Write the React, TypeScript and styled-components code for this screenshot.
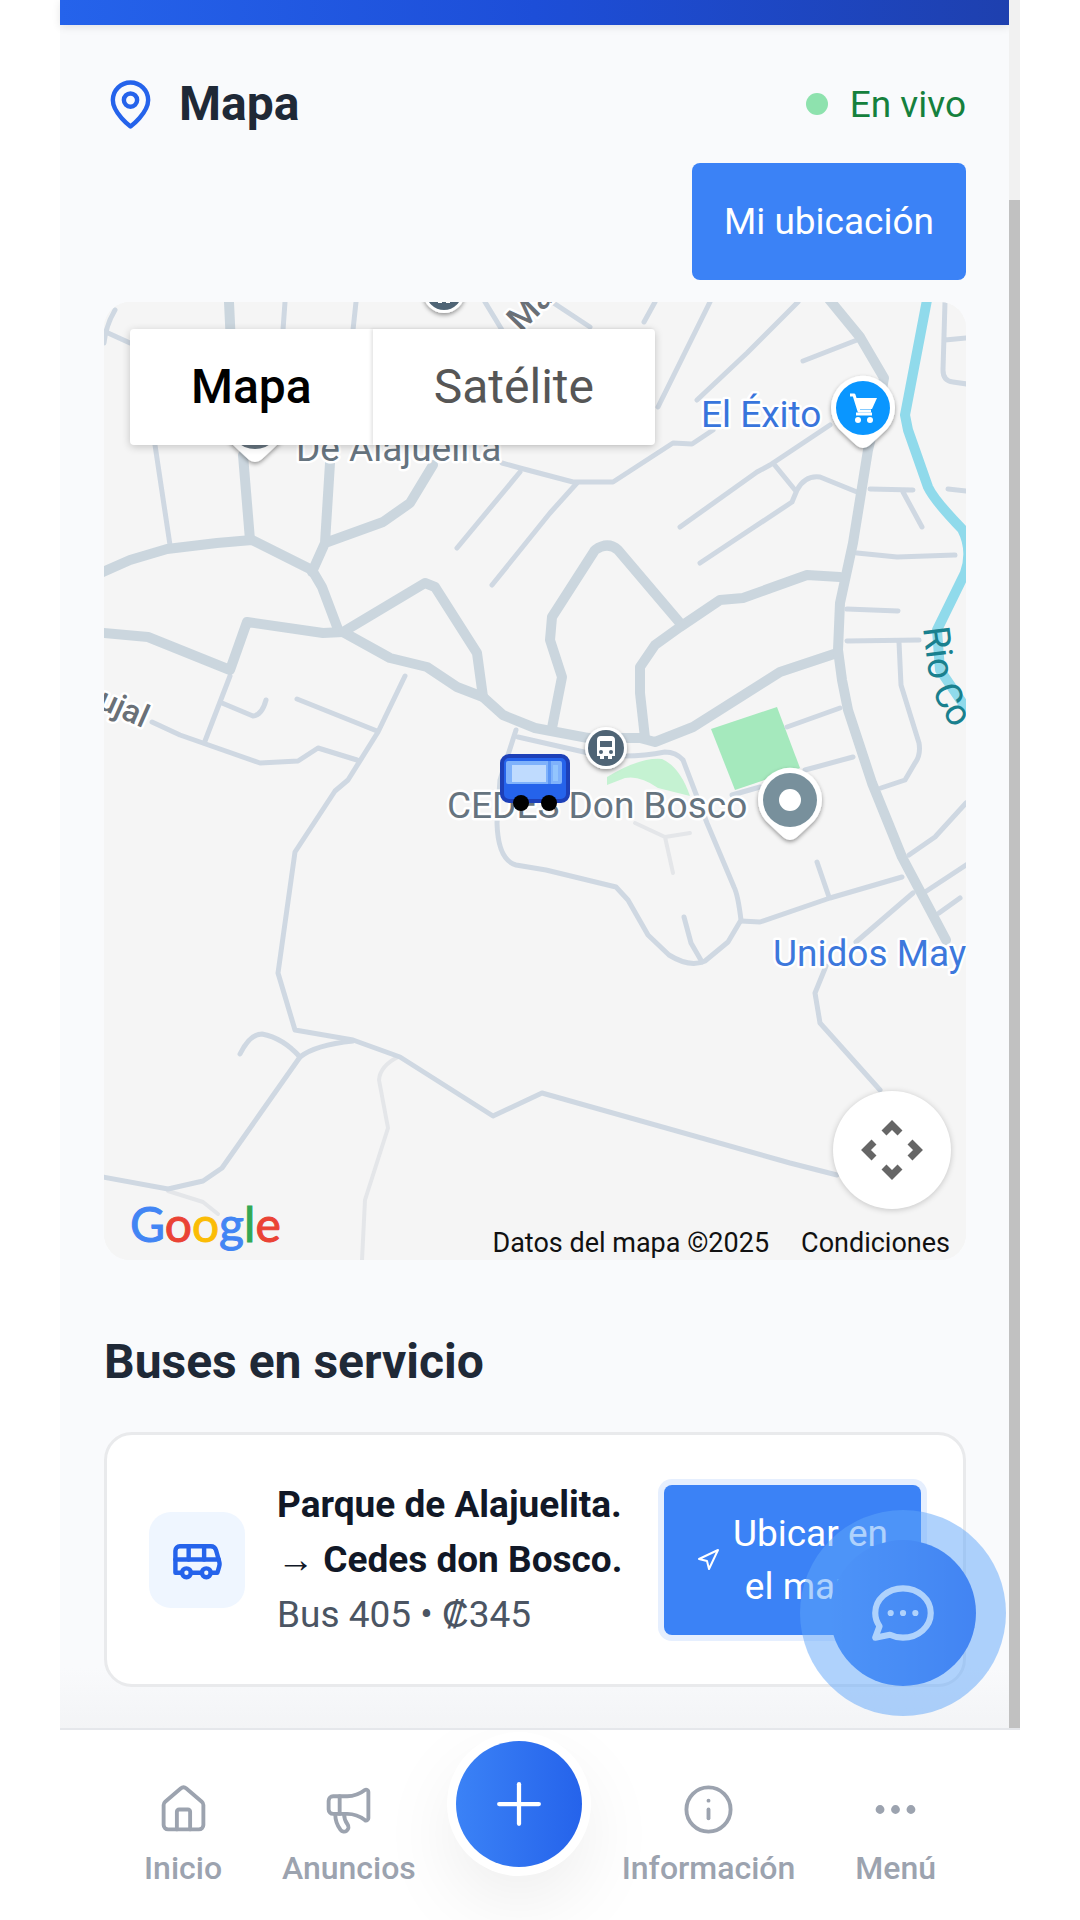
import React from "react";
import styled, { createGlobalStyle } from "styled-components";
import { Bus, Ellipsis, House, Info, Megaphone, Navigation, Plus } from "lucide-react";

const GlobalStyle = createGlobalStyle`
  *, *::before, *::after { box-sizing: border-box; }
  body {
    margin: 0;
    background: #ffffff;
    font-family: Roboto, "Liberation Sans", sans-serif;
    color: #1f2937;
  }
  button { font: inherit; border: 0; padding: 0; cursor: pointer; }
  h1, h2, h3, p { margin: 0; }
`;

const Frame = styled.div`
  position: relative;
  display: flex;
  flex-direction: column;
  max-width: 960px;
  min-height: 100vh;
  margin: 0 auto;
`;

const Viewport = styled.div`
  display: flex;
  flex: 1;
`;

const Page = styled.div`
  flex: 1;
  min-width: 0;
  background: linear-gradient(0deg, #f3f4f6, #f9fafc 60px);
`;

const ScrollTrack = styled.div`
  display: flex;
  width: 11px;
  padding-top: 200px;
  background: #f1f1f1;
`;

const ScrollThumb = styled.div`
  flex: 1;
  background: #c1c1c1;
`;

const TopBar = styled.header`
  height: 25px;
  background: linear-gradient(90deg, #2563eb, #1d4ed8 50%, #1e40af);
  box-shadow: 0 2px 8px rgba(0, 0, 0, 0.1);
`;

const Content = styled.main`
  display: flex;
  flex-direction: column;
  padding: 47px 43px 40px 44px;
`;

const SectionHeader = styled.div`
  display: flex;
  justify-content: space-between;
  align-items: flex-start;
  margin-bottom: 22px;
`;

const TitleGroup = styled.div`
  display: flex;
  align-items: center;
  gap: 22px;
  height: 64px;

  svg { color: #2563eb; }
`;

const Title = styled.h1`
  font-size: 48px;
  line-height: 60px;
  font-weight: 700;
`;

const StatusColumn = styled.div`
  display: flex;
  flex-direction: column;
  align-items: flex-end;
  gap: 27px;
`;

const LiveStatus = styled.div`
  display: flex;
  align-items: center;
  gap: 22px;
  height: 64px;
  font-size: 37px;
  color: #15803d;

  &::before {
    content: "";
    width: 22px;
    height: 22px;
    border-radius: 50%;
    background: #8ee2ae;
  }
`;

const PrimaryButton = styled.button`
  padding: 32px;
  border-radius: 8px;
  background: #3b82f6;
  color: #ffffff;
  font-size: 37px;
  line-height: 53px;
`;

const MapCard = styled.section`
  position: relative;
  overflow: hidden;
  aspect-ratio: 862 / 958;
  border-radius: 26px;
  background: #f5f5f5;
`;

const MapCanvas = styled.svg`
  display: block;
  width: 100%;
  height: 100%;
`;

const MapTypes = styled.div`
  position: absolute;
  top: 27px;
  left: 26px;
  display: flex;
  border-radius: 4px;
  background: #ffffff;
  box-shadow: 0 2px 8px rgba(0, 0, 0, 0.2);
`;

const MapTypeButton = styled.button<{ $active?: boolean }>`
  padding: 28px 61px;
  background: transparent;
  font-size: 48px;
  line-height: 60px;
  font-weight: ${(p) => (p.$active ? 500 : 400)};
  color: ${(p) => (p.$active ? "#000000" : "#565656")};

  & + & { box-shadow: -2px 0 3px rgba(0, 0, 0, 0.1); }
`;

const PanButton = styled.button`
  position: absolute;
  right: 15px;
  bottom: 51px;
  width: 118px;
  height: 118px;
  border-radius: 50%;
  background: #ffffff;
  box-shadow: 0 1px 6px rgba(0, 0, 0, 0.2);

  svg { display: block; margin: auto; }
`;

const MapFooter = styled.div`
  position: absolute;
  left: 26px;
  right: 16px;
  bottom: 0;
  display: flex;
  align-items: flex-end;
  justify-content: space-between;
`;

const GoogleLogo = styled.a`
  padding-bottom: 6px;
  font-family: Lato, Roboto, sans-serif;
  font-size: 48px;
  line-height: 60px;
  font-weight: 400;
  text-decoration: none;
`;

const LogoLetter = styled.span<{ $tone: string }>`
  color: ${(p) => p.$tone};
  -webkit-text-stroke: 1px ${(p) => p.$tone};
`;

const Credits = styled.div`
  display: flex;
  gap: 32px;
  font-size: 27px;
  line-height: 34px;
  color: #111111;
`;

const TermsLink = styled.a`
  color: inherit;
  text-decoration: none;
`;

const ListTitle = styled.h2`
  margin: 72px 0 40px;
  font-size: 48px;
  line-height: 60px;
  font-weight: 700;
`;

const BusCard = styled.article`
  display: flex;
  align-items: center;
  padding: 42px;
  border: 3px solid #e9eaec;
  border-radius: 28px;
  background: #ffffff;
`;

const BusBadge = styled.div`
  display: grid;
  place-items: center;
  flex: none;
  width: 96px;
  height: 96px;
  margin-right: 32px;
  border-radius: 22px;
  background: #eff6ff;
  color: #2563eb;
`;

const BusText = styled.div`
  flex: 1;
  min-width: 0;
  margin-right: 22px;
  font-size: 37px;
  line-height: 55px;
`;

const RouteName = styled.h3`
  font-size: inherit;
  font-weight: 700;
  color: #111827;
`;

const RouteMeta = styled.p`
  color: #4b5563;
`;

const LocateButton = styled(PrimaryButton)`
  display: flex;
  flex: 0 0 257px;
  align-items: center;
  gap: 12px;
  padding: 22px 32px;
  box-shadow: 0 0 0 6px #e6effe;

  svg { flex: none; }
  span { flex: 1; }
`;

const ChatButton = styled.button`
  position: absolute;
  right: 14px;
  bottom: 204px;
  display: grid;
  place-items: center;
  width: 206px;
  height: 206px;
  border-radius: 50%;
  background: transparent;

  &::after {
    content: "";
    position: absolute;
    inset: 0;
    border-radius: 50%;
    background: rgba(96, 165, 250, 0.5);
  }
`;

const ChatDisc = styled.span`
  display: grid;
  place-items: center;
  width: 146px;
  height: 146px;
  border-radius: 50%;
  background: linear-gradient(90deg, #3b82f6, #2563eb);
  color: #ffffff;
`;

const BottomNav = styled.nav`
  display: flex;
  justify-content: space-between;
  align-items: flex-start;
  height: 192px;
  padding: 0 64px;
  overflow: hidden;
  border-top: 2px solid #e5e7eb;
  background: #ffffff;
`;

const NavLink = styled.a`
  display: flex;
  flex-direction: column;
  align-items: center;
  gap: 11px;
  padding: 53px 20px 0;
  color: #9ca3af;
  font-size: 32px;
  line-height: 42px;
  font-weight: 500;
  text-decoration: none;
`;

const AddButton = styled.button`
  display: grid;
  place-items: center;
  width: 126px;
  height: 126px;
  margin-top: 11px;
  border-radius: 50%;
  background: linear-gradient(90deg, #3b82f6, #2563eb);
  color: #ffffff;
  box-shadow: 0 0 0 9px #ffffff, 0 30px 80px 4px rgba(0, 0, 0, 0.08);
`;

const streets = [
  "M115 310Q106 325 104 343M108 333L130 343",
  "M285 302L283 330M356 302L353 330M485 302L502 330",
  "M155 445L170 545",
  "M520 472L457 548M577 483L550 513L492 585",
  "M502 463L520 468L573 482H613L673 443L692 444L713 430",
  "M552 302L590 327M655 302L644 322M710 302L658 407M798 302L747 353L697 400",
  "M803 361L857 340",
  "M680 527L757 472L770 465L830 425M773 463L795 490",
  "M700 563L792 502L797 490Q805 475 820 477L857 492",
  "M870 489L913 490M903 492L922 527M948 489L967 491",
  "M857 553L897 557L955 555M847 609L898 611M847 641L919 640",
  "M899 642L901 685L919 743Q921 755 915 763L905 780L881 788",
  "M787 727L840 708M805 770L853 757M732 795L760 787",
  "M945 302L943 370Q943 381 953 382L967 384M945 340L967 338",
  "M230 676L205 741M222 703L253 716Q262 715 266 700",
  "M152 722L180 735L260 763L298 761L318 748L357 760M297 699L377 731",
  "M405 676L378 732L348 780L335 791L295 852L278 973L295 1030L353 1040L400 1057L493 1116L542 1093L790 1163L837 1175",
  "M240 1054Q250 1034 262 1034Q283 1038 300 1057Q315 1045 353 1041",
  "M300 1057L222 1168L203 1181L168 1189L103 1177",
  "M516 730L500 780L497 823Q498 860 516 865L546 870L616 887L628 900L648 935L669 955Q690 968 705 961L728 942L741 920Q738 895 734 887L707 823L683 760Q676 752 665 752Q625 760 584 752L518 737",
  "M741 921L760 922L830 898L902 877M817 862L829 897M684 917L691 943L702 962",
  "M966 803L935 837L909 855M966 865L925 892M913 893L856 942M939 913L960 898",
  "M826 966L815 993L820 1023L880 1090",
];

const avenues = [
  "M103 572L130 560L167 549L217 543L252 540L312 570L322 587L339 632",
  "M229 302L231 345M243 455L250 540",
  "M330 463L325 543L312 572M325 543L383 522L410 503L433 465",
  "M103 633L148 637L230 670L247 622L323 633L343 632L425 583L435 587L477 653L483 697",
  "M343 632L390 658L427 667L457 687L483 697L503 715L535 728L588 738H640L655 742L693 727L780 672L837 653",
  "M552 728L562 677L550 640L552 617L595 550Q608 541 618 550L680 623",
  "M645 738L640 693V667L655 645L680 627L720 600L743 598L807 575L840 577",
];

const trails = [
  "M398 1057Q380 1066 379 1080L388 1128L365 1200L362 1260",
  "M168 1191L203 1202L218 1214",
  "M635 823L665 837L690 833M665 837L673 873",
];

const LocationIcon = () => (
  <svg width="53" height="53" viewBox="0 0 24 24" fill="none" stroke="currentColor" strokeWidth="2" strokeLinecap="round" strokeLinejoin="round" aria-hidden="true">
    <path d="M20 10c0 6-8 12-8 12s-8-6-8-12a8 8 0 0 1 16 0Z" />
    <circle cx="12" cy="10" r="3" />
  </svg>
);

const PlacePin = ({ x, y, fill, children }: { x: number; y: number; fill: string; children?: React.ReactNode }) => (
  <g transform={`translate(${x} ${y})`}>
    <path d="M-24 21A32 32 0 1 1 24 21L7 37Q0 43 -7 37Z" fill="#fff" filter="url(#lift)" />
    <circle r="27" fill={fill} />
    {children}
  </g>
);

const StopIcon = ({ x, y }: { x: number; y: number }) => (
  <g transform={`translate(${x} ${y})`}>
    <circle r="21" fill="#fff" filter="url(#lift)" />
    <circle r="18" fill="#4f6475" />
    <path d="M-9 -8Q-9 -12 -5 -12H5Q9 -12 9 -8V8H6V11H2V8H-2V11H-6V8H-9Z" fill="#fff" />
    <path d="M-6 -7H6V-1H-6Z" fill="#4f6475" />
    <circle cx="-5" cy="4" r="2" fill="#4f6475" />
    <circle cx="5" cy="4" r="2" fill="#4f6475" />
  </g>
);

const StreetMap = () => (
  <MapCanvas viewBox="104 302 862 958" preserveAspectRatio="xMidYMid slice" role="img" aria-label="Mapa de Alajuelita">
    <defs>
      <filter id="lift" x="-30%" y="-30%" width="160%" height="160%">
        <feDropShadow dx="0" dy="2" stdDeviation="2" floodOpacity="0.4" />
      </filter>
      <path id="river-label" d="M923 628L928 668Q931 692 943 713Q953 731 975 753" />
    </defs>
    <rect x="104" y="302" width="862" height="958" fill="#f5f5f5" />
    <path d="M711 729L777 707L800 768L735 790Z" fill="#a5e9bd" />
    <path d="M607 785V777Q640 757 662 759Q680 767 690 796L658 788Q640 775 625 778Z" fill="#c5f2d2" />
    <g fill="none" strokeLinecap="round" strokeLinejoin="round">
      <g stroke="#e4e6e9" strokeWidth="4">{trails.map((d) => <path key={d} d={d} />)}</g>
      <g stroke="#cfd8e2" strokeWidth="5">{streets.map((d) => <path key={d} d={d} />)}</g>
      <g stroke="#cbd6de" strokeWidth="10">
        {avenues.map((d) => <path key={d} d={d} />)}
        <path d="M828 298L860 337L884 378L880 400L868 450L853 543L840 603L838 650L842 680L848 710L872 783L902 857L946 940" />
      </g>
      <path d="M927 300L905 415L908 430L928 487Q934 500 962 529Q973 550 965 573L937 630L940 670L970 714" stroke="#90daeb" strokeWidth="10" />
    </g>
    <g fontSize="37" stroke="#fff" strokeWidth="5" strokeLinejoin="round" paintOrder="stroke">
      <text x="296" y="461" fill="#66747f">De Alajuelita</text>
      <text x="701" y="427" fill="#3875dc">El Éxito</text>
      <text x="447" y="818" fill="#66747f">CEDES Don Bosco</text>
      <text x="773" y="966" fill="#3d78dc">Unidos May</text>
      <text transform="translate(143 728) rotate(24)" textAnchor="end" fontSize="32" fontWeight="500" fill="#6a7077">ujal</text>
      <text transform="translate(521 333) rotate(-45)" fontSize="34" fontWeight="500" fill="#6a7077">Ma</text>
      <text fill="#19808e" stroke="none"><textPath href="#river-label">Rio Co</textPath></text>
    </g>
    <StopIcon x={444} y={292} />
    <StopIcon x={606} y={748} />
    <PlacePin x={255} y={422} fill="#66747f" />
    <PlacePin x={863} y={408} fill="#0a96ff">
      <path d="M-13 -13H-9L-4 3H8" fill="none" stroke="#fff" strokeWidth="3" strokeLinejoin="round" />
      <path d="M-8 -10H14L9 1H-5Z" fill="#fff" />
      <path d="M-7 6H9" stroke="#fff" strokeWidth="3" />
      <circle cx="-5" cy="12" r="3" fill="#fff" />
      <circle cx="7" cy="12" r="3" fill="#fff" />
    </PlacePin>
    <PlacePin x={790} y={800} fill="#78909c"><circle r="11" fill="#fff" /></PlacePin>
    <g>
      <rect x="502" y="756" width="66" height="45" rx="7" fill="#2563eb" stroke="#1d40b8" strokeWidth="4" />
      <rect x="506" y="761" width="56" height="23" rx="2" fill="#7fb2fb" />
      <rect x="512" y="765" width="34" height="17" fill="#bfdbfe" />
      <rect x="548" y="761" width="3" height="23" fill="#5a95f5" />
      <rect x="553" y="765" width="5" height="16" fill="#93c5fd" />
      <circle cx="521" cy="803" r="8" />
      <circle cx="549" cy="803" r="8" />
    </g>
  </MapCanvas>
);

const logo: [string, string][] = [
  ["G", "#4285f4"], ["o", "#ea4335"], ["o", "#fbbc05"], ["g", "#4285f4"], ["l", "#34a853"], ["e", "#ea4335"],
];

export default function App() {
  return (
    <>
      <GlobalStyle />
      <Frame>
        <Viewport>
          <Page>
            <TopBar />
            <Content>
              <SectionHeader>
                <TitleGroup>
                  <LocationIcon />
                  <Title>Mapa</Title>
                </TitleGroup>
                <StatusColumn>
                  <LiveStatus>En vivo</LiveStatus>
                  <PrimaryButton type="button">Mi ubicación</PrimaryButton>
                </StatusColumn>
              </SectionHeader>

              <MapCard>
                <StreetMap />
                <MapTypes>
                  <MapTypeButton type="button" $active>Mapa</MapTypeButton>
                  <MapTypeButton type="button">Satélite</MapTypeButton>
                </MapTypes>
                <PanButton type="button" aria-label="Controles de cámara">
                  <svg width="66" height="66" viewBox="-33 -33 66 66" fill="none" stroke="#666" strokeWidth="7">
                    <path d="M-8 -17L0 -25L8 -17M-8 17L0 25L8 17M-18 -8L-26 0L-18 8M18 -8L26 0L18 8" />
                  </svg>
                </PanButton>
                <MapFooter>
                  <GoogleLogo href="#google" aria-label="Google">
                    {logo.map(([letter, tone], i) => <LogoLetter key={i} $tone={tone}>{letter}</LogoLetter>)}
                  </GoogleLogo>
                  <Credits>
                    <span>Datos del mapa ©2025</span>
                    <TermsLink href="#condiciones">Condiciones</TermsLink>
                  </Credits>
                </MapFooter>
              </MapCard>

              <ListTitle>Buses en servicio</ListTitle>
              <BusCard>
                <BusBadge><Bus size={53} /></BusBadge>
                <BusText>
                  <RouteName>Parque de Alajuelita. → Cedes don Bosco.</RouteName>
                  <RouteMeta>Bus 405 • ₡345</RouteMeta>
                </BusText>
                <LocateButton type="button">
                  <Navigation size={24} />
                  <span>Ubicar en el mapa</span>
                </LocateButton>
              </BusCard>
            </Content>
          </Page>
          <ScrollTrack><ScrollThumb /></ScrollTrack>
        </Viewport>
        <BottomNav>
          <NavLink href="#inicio"><House size={53} strokeWidth={1.75} />Inicio</NavLink>
          <NavLink href="#anuncios"><Megaphone size={53} strokeWidth={1.75} />Anuncios</NavLink>
          <AddButton type="button" aria-label="Agregar"><Plus size={68} strokeWidth={1.5} /></AddButton>
          <NavLink href="#informacion"><Info size={53} strokeWidth={1.75} />Información</NavLink>
          <NavLink href="#menu"><Ellipsis size={53} />Menú</NavLink>
        </BottomNav>
        <ChatButton type="button" aria-label="Abrir chat">
          <ChatDisc>
            <svg width="74" height="74" viewBox="0 0 24 24" fill="none" stroke="currentColor" strokeWidth="2" strokeLinecap="round" strokeLinejoin="round">
              <path d="M8 12h.01M12 12h.01M16 12h.01M21 12c0 4.418-4.03 8-9 8a9.863 9.863 0 01-4.255-.949L3 20l1.395-3.72C3.512 15.042 3 13.574 3 12c0-4.418 4.03-8 9-8s9 3.582 9 8z" />
            </svg>
          </ChatDisc>
        </ChatButton>
      </Frame>
    </>
  );
}
